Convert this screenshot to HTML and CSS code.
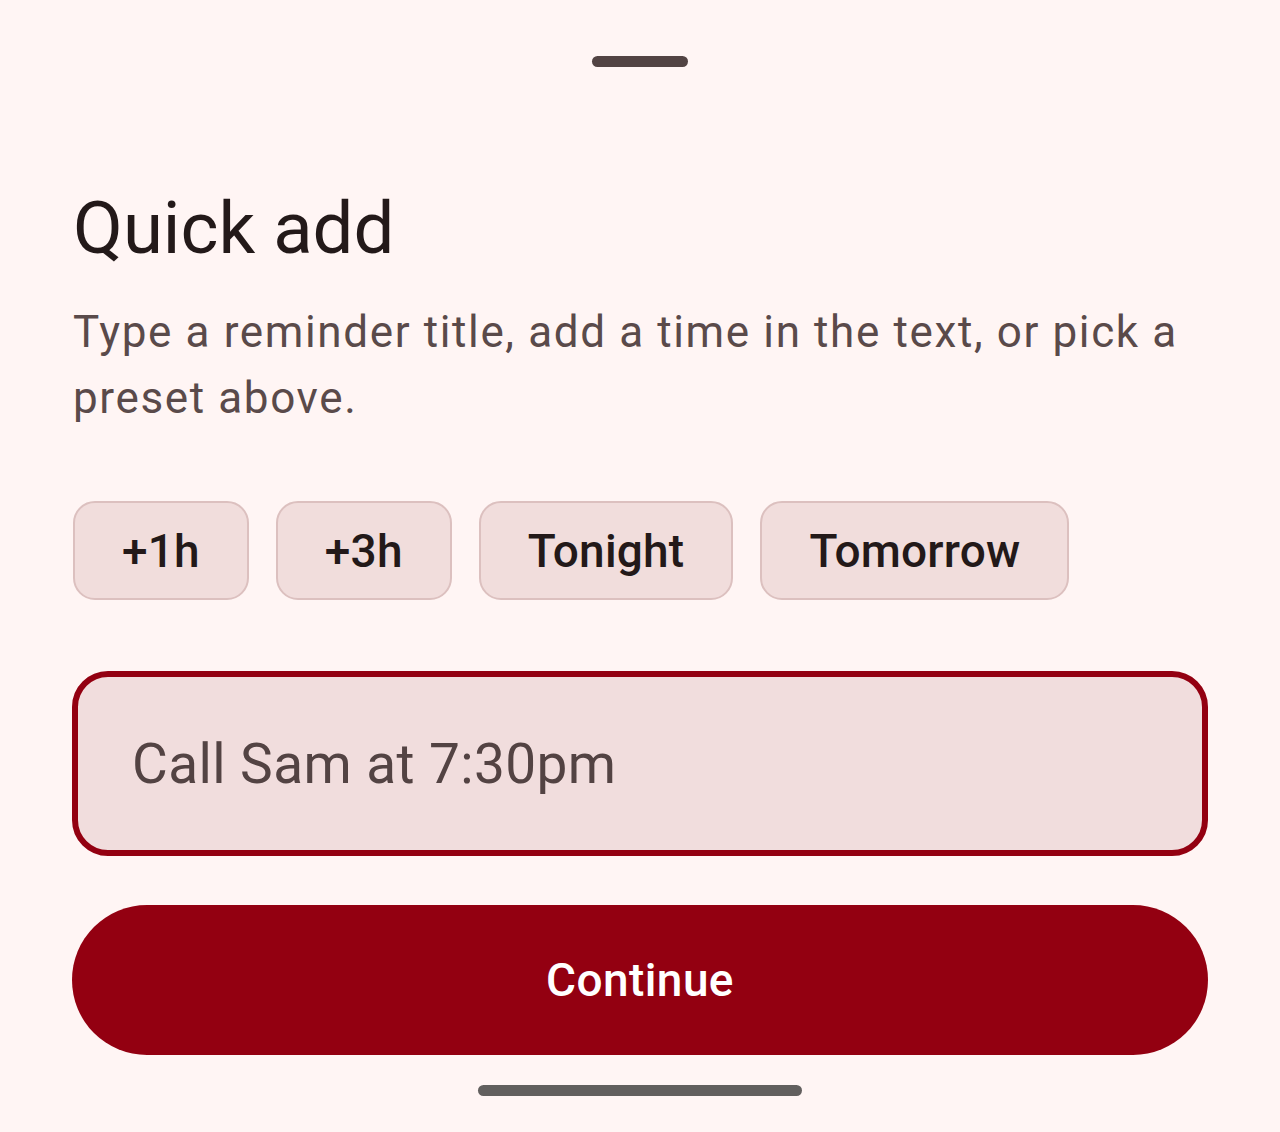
FILE: index.html
```html
<!DOCTYPE html>
<html lang="en">
<head>
    <meta charset="UTF-8">
    <meta name="viewport" content="width=device-width, initial-scale=1.0">
    <title>Quick add</title>
    <link rel="stylesheet" href="styles.css">
</head>
<body>

<div class="sheet">
    <div class="handle"></div>

    <h1 class="title">Quick add</h1>
    <p class="hint">Type a reminder title, add a time in the text, or pick a preset above.</p>

    <div class="chips">
        <button class="chip">+1h</button>
        <button class="chip">+3h</button>
        <button class="chip">Tonight</button>
        <button class="chip">Tomorrow</button>
    </div>

    <div class="field">
        <input type="text" class="field-input" value="Call Sam at 7:30pm">
    </div>

    <button class="btn-continue">Continue</button>

    <div class="nav-bar"></div>
</div>

</body>
</html>
```

FILE: styles.css
```css
body {
    margin: 0;
    padding: 0;
    background-color: #fff5f4;
    font-family: Roboto, "Liberation Sans", sans-serif;
    color: #231919;
}

.sheet {
    display: flex;
    flex-direction: column;
    padding: 56px 72px 0;
    height: 1132px;
    box-sizing: border-box;
}

.handle {
    align-self: center;
    width: 96px;
    height: 11px;
    border-radius: 6px;
    background-color: #524343;
}

.title {
    margin: 118px 0 0 1px;
    font-size: 72.5px;
    line-height: 88px;
    font-weight: 400;
    color: #231919;
}

.hint {
    margin: 26px 0 0 1px;
    font-size: 44px;
    line-height: 66px;
    letter-spacing: 1.625px;
    color: #5a4a4a;
}

.chips {
    display: flex;
    gap: 27px;
    margin-top: 70px;
    margin-left: 1px;
}

.chip {
    height: 99px;
    padding: 0 47px;
    border: 2px solid #dcc0bf;
    border-radius: 22px;
    background-color: #f1dddc;
    font-family: Roboto, "Liberation Sans", sans-serif;
    font-size: 46px;
    font-weight: 500;
    letter-spacing: 0.2px;
    color: #231919;
}

.field {
    margin-top: 71px;
    height: 185px;
    border: 6px solid #930011;
    border-radius: 36px;
    background-color: #f1dddd;
    box-sizing: border-box;
    display: flex;
    align-items: center;
    padding: 0 54px;
}

.field-input {
    width: 100%;
    border: none;
    outline: none;
    background: transparent;
    padding: 0;
    font-family: Roboto, "Liberation Sans", sans-serif;
    font-size: 55px;
    letter-spacing: 0.4px;
    color: #534343;
}

.btn-continue {
    margin-top: 49px;
    height: 150px;
    border: none;
    border-radius: 75px;
    background-color: #930011;
    color: white;
    font-family: Roboto, "Liberation Sans", sans-serif;
    font-size: 46px;
    font-weight: 500;
    letter-spacing: 0.4px;
}

.nav-bar {
    align-self: center;
    margin-top: 30px;
    width: 324px;
    height: 11px;
    border-radius: 6px;
    background-color: #625f5e;
}
```
